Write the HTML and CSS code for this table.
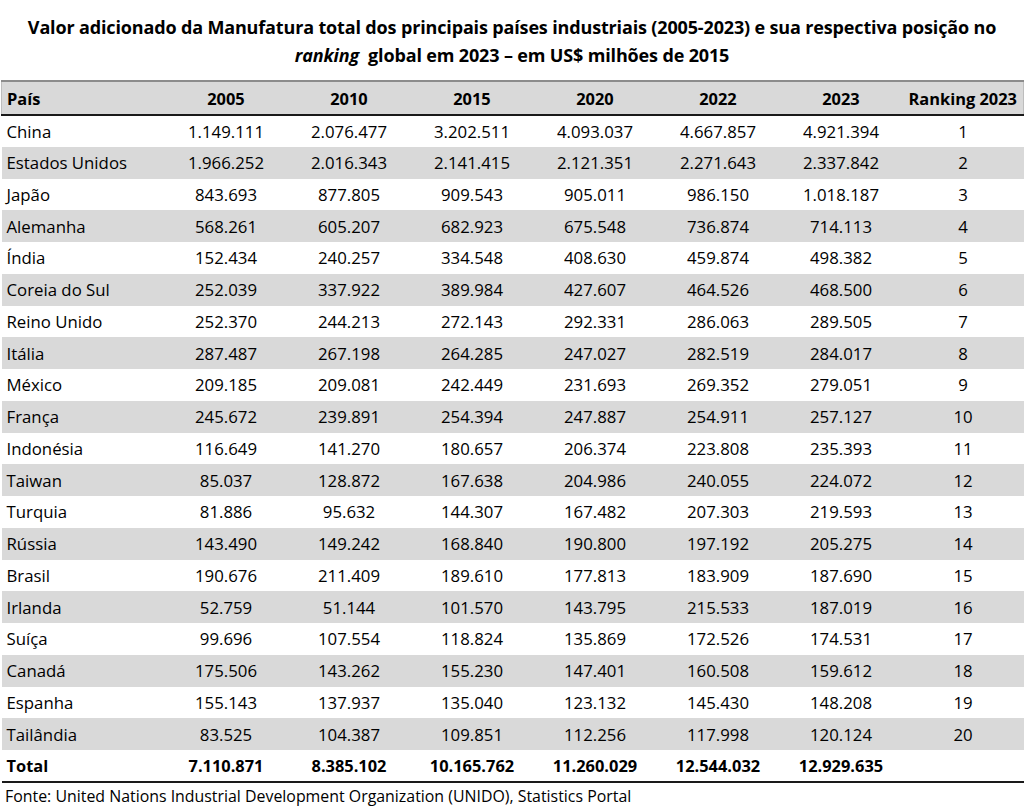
FILE: index.html
```html
<!DOCTYPE html>
<html lang="pt">
<head>
<meta charset="utf-8">
<link rel="stylesheet" href="styles.css">
</head>
<body>
<div class="page">
  <h1 class="title">Valor adicionado da Manufatura total dos principais países industriais (2005-2023) e sua respectiva posição no<br><em>ranking</em>&nbsp; global em 2023 – em US$ milhões de 2015</h1>
  <table class="data">
    <thead>
      <tr><th class="country">País</th><th>2005</th><th>2010</th><th>2015</th><th>2020</th><th>2022</th><th>2023</th><th>Ranking 2023</th></tr>
    </thead>
    <tbody>
      <tr><td class="country">China</td><td>1.149.111</td><td>2.076.477</td><td>3.202.511</td><td>4.093.037</td><td>4.667.857</td><td>4.921.394</td><td>1</td></tr>
      <tr><td class="country">Estados Unidos</td><td>1.966.252</td><td>2.016.343</td><td>2.141.415</td><td>2.121.351</td><td>2.271.643</td><td>2.337.842</td><td>2</td></tr>
      <tr><td class="country">Japão</td><td>843.693</td><td>877.805</td><td>909.543</td><td>905.011</td><td>986.150</td><td>1.018.187</td><td>3</td></tr>
      <tr><td class="country">Alemanha</td><td>568.261</td><td>605.207</td><td>682.923</td><td>675.548</td><td>736.874</td><td>714.113</td><td>4</td></tr>
      <tr><td class="country">Índia</td><td>152.434</td><td>240.257</td><td>334.548</td><td>408.630</td><td>459.874</td><td>498.382</td><td>5</td></tr>
      <tr><td class="country">Coreia do Sul</td><td>252.039</td><td>337.922</td><td>389.984</td><td>427.607</td><td>464.526</td><td>468.500</td><td>6</td></tr>
      <tr><td class="country">Reino Unido</td><td>252.370</td><td>244.213</td><td>272.143</td><td>292.331</td><td>286.063</td><td>289.505</td><td>7</td></tr>
      <tr><td class="country">Itália</td><td>287.487</td><td>267.198</td><td>264.285</td><td>247.027</td><td>282.519</td><td>284.017</td><td>8</td></tr>
      <tr><td class="country">México</td><td>209.185</td><td>209.081</td><td>242.449</td><td>231.693</td><td>269.352</td><td>279.051</td><td>9</td></tr>
      <tr><td class="country">França</td><td>245.672</td><td>239.891</td><td>254.394</td><td>247.887</td><td>254.911</td><td>257.127</td><td>10</td></tr>
      <tr><td class="country">Indonésia</td><td>116.649</td><td>141.270</td><td>180.657</td><td>206.374</td><td>223.808</td><td>235.393</td><td>11</td></tr>
      <tr><td class="country">Taiwan</td><td>85.037</td><td>128.872</td><td>167.638</td><td>204.986</td><td>240.055</td><td>224.072</td><td>12</td></tr>
      <tr><td class="country">Turquia</td><td>81.886</td><td>95.632</td><td>144.307</td><td>167.482</td><td>207.303</td><td>219.593</td><td>13</td></tr>
      <tr><td class="country">Rússia</td><td>143.490</td><td>149.242</td><td>168.840</td><td>190.800</td><td>197.192</td><td>205.275</td><td>14</td></tr>
      <tr><td class="country">Brasil</td><td>190.676</td><td>211.409</td><td>189.610</td><td>177.813</td><td>183.909</td><td>187.690</td><td>15</td></tr>
      <tr><td class="country">Irlanda</td><td>52.759</td><td>51.144</td><td>101.570</td><td>143.795</td><td>215.533</td><td>187.019</td><td>16</td></tr>
      <tr><td class="country">Suíça</td><td>99.696</td><td>107.554</td><td>118.824</td><td>135.869</td><td>172.526</td><td>174.531</td><td>17</td></tr>
      <tr><td class="country">Canadá</td><td>175.506</td><td>143.262</td><td>155.230</td><td>147.401</td><td>160.508</td><td>159.612</td><td>18</td></tr>
      <tr><td class="country">Espanha</td><td>155.143</td><td>137.937</td><td>135.040</td><td>123.132</td><td>145.430</td><td>148.208</td><td>19</td></tr>
      <tr><td class="country">Tailândia</td><td>83.525</td><td>104.387</td><td>109.851</td><td>112.256</td><td>117.998</td><td>120.124</td><td>20</td></tr>
    </tbody>
    <tfoot>
      <tr><td class="country">Total</td><td>7.110.871</td><td>8.385.102</td><td>10.165.762</td><td>11.260.029</td><td>12.544.032</td><td>12.929.635</td><td></td></tr>
    </tfoot>
  </table>
  <p class="source">Fonte: United Nations Industrial Development Organization (UNIDO), Statistics Portal</p>
</div>
</body>
</html>
```

FILE: styles.css
```css
html, body {
  margin: 0;
  padding: 0;
  background: #ffffff;
}

.page {
  width: 1024px;
  font-family: "Open Sans", "Liberation Sans", sans-serif;
  color: #000000;
}

.title {
  margin: 0;
  padding-top: 13px;
  height: 80px;
  box-sizing: border-box;
  text-align: center;
  font-size: 18px;
  font-weight: 700;
  line-height: 28px;
  letter-spacing: -0.15px;
}

.title em {
  font-style: italic;
}

.data {
  width: 1022px;
  margin: 0 1px;
  border-collapse: collapse;
  table-layout: fixed;
  font-size: 16.8px;
}

.data th,
.data td {
  height: 31.75px;
  padding: 0;
  text-align: center;
  vertical-align: middle;
  box-sizing: border-box;
  width: 123px;
}

.data th.country,
.data td.country {
  width: 163px;
  text-align: left;
  padding-left: 5px;
}

.data th:last-child,
.data td:last-child {
  width: 121px;
}

.data thead tr {
  background: #d9d9d9;
  border-top: 2px solid #8c8c8c;
  border-bottom: 2px solid #1a1a1a;
  border-left: 1px solid #bdbdbd;
  border-right: 1px solid #bdbdbd;
}

.data th {
  font-weight: 700;
  height: 34px;
  font-size: 16.4px;
}

.data tbody tr:nth-child(even) {
  background: #d9d9d9;
}

.data tfoot tr {
  border-bottom: 2px solid #1a1a1a;
}

.data tfoot td {
  font-weight: 700;
  font-size: 16.4px;
}

.source {
  margin: 0;
  padding: 2px 0 0 5px;
  font-size: 15.9px;
  line-height: 22px;
}
```
